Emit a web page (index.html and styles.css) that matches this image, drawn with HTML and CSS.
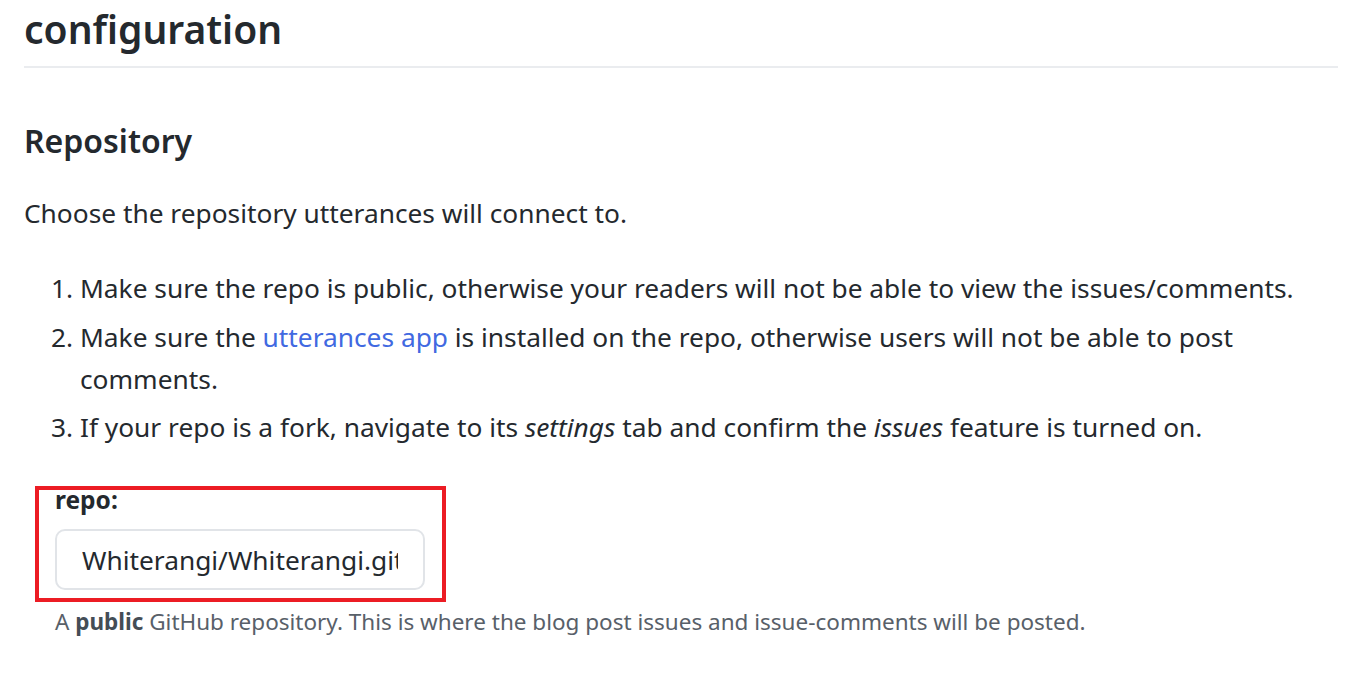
FILE: index.html
```html
<!DOCTYPE html>
<html lang="en">
<head>
<meta charset="utf-8">
<title>configuration</title>
<link rel="stylesheet" href="styles.css">
</head>
<body>
<main class="page">
  <h1 class="title">configuration</h1>
  <h2 class="section">Repository</h2>
  <p class="intro">Choose the repository utterances will connect to.</p>
  <ol class="steps">
    <li>Make sure the repo is public, otherwise your readers will not be able to view the issues/comments.</li>
    <li>Make sure the <a class="link" href="#">utterances app</a> is installed on the repo, otherwise users will not be able to post comments.</li>
    <li>If your repo is a fork, navigate to its <em>settings</em> tab and confirm the <em>issues</em> feature is turned on.</li>
  </ol>
  <div class="form-group">
    <div class="highlight"></div>
    <label class="label" for="repo">repo:</label>
    <input class="input" id="repo" type="text" value="Whiterangi/Whiterangi.github.io">
    <p class="note">A <strong>public</strong> GitHub repository. This is where the blog post issues and issue-comments will be posted.</p>
  </div>
</main>
</body>
</html>
```

FILE: styles.css
```css
html, body {
  margin: 0;
  padding: 0;
  background: #fff;
}
body {
  font-family: "Noto Sans", "Open Sans", sans-serif;
  color: #24292e;
  font-size: 26.3px;
  line-height: 1.5;
}
.page {
  padding: 0 16px 0 24px;
}
.title {
  margin: 5px 0 0 0;
  font-size: 39px;
  font-weight: 600;
  line-height: 1.25;
  padding-bottom: 12px;
  border-bottom: 2px solid #eaecef;
}
.section {
  margin: 53px 0 0 0;
  font-size: 32px;
  font-weight: 600;
  line-height: 1.25;
}
.intro {
  margin: 33px 0 0 0;
}
.steps {
  margin: 34px 0 0 0;
  padding-left: 56px;
}
.steps li {
  line-height: 42px;
  margin-top: 6.5px;
}
.steps li:first-child {
  margin-top: 0;
}
.link {
  color: #4169e1;
  text-decoration: none;
}
.form-group {
  position: relative;
  margin: 38px 0 0 31px;
}
.highlight {
  position: absolute;
  left: -20px;
  top: 0;
  width: 403px;
  height: 108px;
  border: 4px solid #ec1c24;
}
.label {
  display: block;
  font-weight: 700;
  font-size: 24.5px;
  line-height: 28px;
}
.input {
  display: block;
  margin-top: 15px;
  width: 370px;
  height: 61px;
  box-sizing: border-box;
  border: 2px solid #e1e4e8;
  border-radius: 10px;
  padding: 0 25px;
  font-family: inherit;
  font-size: 26.3px;
  color: #24292e;
  background: #fff;
}
.note {
  margin: 17px 0 0 0;
  font-size: 22.5px;
  line-height: 30px;
  color: #586069;
}
.note strong {
  color: #444d56;
}
```
